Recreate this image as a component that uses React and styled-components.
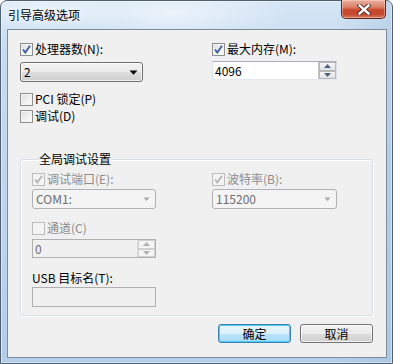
import React from 'react';
import styled, { createGlobalStyle } from 'styled-components';

const GlobalStyle = createGlobalStyle`
  html, body {
    margin: 0;
    padding: 0;
    background: #ffffff;
  }
  body {
    font-family: "Noto Sans CJK SC", "DejaVu Sans", sans-serif;
    font-size: 12px;
    color: #000;
  }
`;

const Window = styled.div`
  width: 393px;
  height: 364px;
  box-sizing: border-box;
  border: 1px solid #4f6072;
  border-radius: 7px 7px 0 0;
  padding: 0 5px 5px 6px;
  display: flex;
  flex-direction: column;
  background:
    radial-gradient(ellipse 120px 30px at 170px 12px, rgba(255, 255, 255, 0.55), rgba(255, 255, 255, 0)),
    radial-gradient(ellipse 90px 24px at 40px 10px, rgba(255, 255, 255, 0.5), rgba(255, 255, 255, 0)),
    linear-gradient(to right, rgba(255, 255, 255, 0) 85%, rgba(160, 190, 220, 0.4)),
    linear-gradient(to bottom, #d6e6f6 0%, #c7dbef 15%, #bdd4ec 60%, #b4cde8 100%);
  box-shadow: inset 0 0 0 1px rgba(255, 255, 255, 0.45);
`;

const TitleBar = styled.div`
  height: 28px;
  display: flex;
  justify-content: space-between;
  align-items: flex-start;
`;

const Title = styled.div`
  padding: 6px 0 0 1px;
  line-height: 16px;
  font-size: 12px;
  text-shadow: 0 0 6px rgba(255, 255, 255, 0.9);
`;

const CloseButton = styled.div`
  width: 45px;
  height: 19px;
  margin: -1px 1px 0 0;
  box-sizing: border-box;
  border: 1px solid #5e2519;
  border-top: none;
  border-radius: 0 0 5px 5px;
  display: flex;
  align-items: center;
  justify-content: center;
  background: linear-gradient(to bottom, #eab0a2 0%, #db8068 40%, #c8462c 55%, #c64a31 80%, #d97a5f 100%);
  box-shadow: inset 0 0 0 1px rgba(255, 220, 210, 0.45);
`;

const Client = styled.div`
  flex: 1;
  box-sizing: border-box;
  border: 1px solid #7d8c9c;
  background: #f0f0f0;
  padding: 11px 13px 0 12px;
  display: flex;
  flex-direction: column;
`;

const Columns = styled.div`
  display: grid;
  grid-template-columns: ${(p) => p.$left}px 1fr;
`;

const Column = styled.div`
  display: flex;
  flex-direction: column;
`;

const Row = styled.div`
  height: 16px;
  display: flex;
  align-items: center;
  gap: 2px;
  margin-top: ${(p) => p.$mt || 0}px;
  color: ${(p) => (p.$disabled ? '#8d8d8d' : '#000')};
  white-space: nowrap;
  line-height: 16px;
`;

const Box = styled.span`
  width: 13px;
  height: 13px;
  box-sizing: border-box;
  border: 1px solid ${(p) => (p.$disabled ? '#bcbcbc' : '#8e8f8f')};
  background: ${(p) =>
    p.$disabled
      ? '#f4f4f4'
      : 'linear-gradient(135deg, #dcdcdc 0%, #f2f2f2 60%, #ffffff 100%)'};
  box-shadow: inset 0 0 0 1px #f4f4f4;
  display: flex;
  align-items: center;
  justify-content: center;
  flex: none;
`;

const Check = ({ checked, disabled, children, mt }) => (
  <Row $mt={mt} $disabled={disabled}>
    <Box $disabled={disabled}>
      {checked && (
        <svg width="9" height="9" viewBox="0 0 9 9">
          <path
            d="M1 4.5 L3.3 7.5 L8 0.8"
            fill="none"
            stroke={disabled ? '#b5b5b5' : '#3d58a4'}
            strokeWidth="1.8"
          />
        </svg>
      )}
    </Box>
    <span>{children}</span>
  </Row>
);

const SelectBox = styled.div`
  width: ${(p) => p.$w}px;
  height: 20px;
  margin-top: ${(p) => p.$mt || 0}px;
  box-sizing: border-box;
  border: 1px solid ${(p) => (p.$disabled ? '#aeb2b5' : '#707070')};
  border-radius: 3px;
  display: flex;
  align-items: center;
  justify-content: space-between;
  padding: 0 4px 0 3px;
  color: ${(p) => (p.$disabled ? '#6d6d6d' : '#000')};
  background: ${(p) =>
    p.$disabled
      ? '#f4f4f4'
      : 'linear-gradient(to bottom, #f2f2f2 0%, #ebebeb 50%, #dddddd 51%, #cfcfcf 100%)'};
  box-shadow: inset 0 0 0 1px ${(p) => (p.$disabled ? '#f4f4f4' : 'rgba(255,255,255,0.7)')};
  line-height: 18px;
`;

const Select = ({ value, w, disabled, mt }) => (
  <SelectBox $w={w} $disabled={disabled} $mt={mt}>
    <span>{value}</span>
    <svg width="9" height="5" viewBox="0 0 9 5">
      {disabled ? (
        <path d="M1.5 0.5 H7.5 L4.5 4 Z" fill="#a8a8a8" />
      ) : (
        <path d="M0.5 0.5 H8.5 L4.5 4.8 Z" fill="#000" />
      )}
    </svg>
  </SelectBox>
);

const Field = styled.div`
  width: ${(p) => p.$w}px;
  height: ${(p) => p.$h || 19}px;
  margin-top: ${(p) => p.$mt || 0}px;
  box-sizing: border-box;
  border: 1px solid;
  border-color: ${(p) =>
    p.$disabled ? '#afafaf' : '#abadb3 #dbdfe6 #e3e9ef #e2e3ea'};
  background: ${(p) => (p.$disabled ? '#f0f0f0' : '#ffffff')};
  display: flex;
  align-items: stretch;
  color: ${(p) => (p.$disabled ? '#6d6d6d' : '#000')};
`;

const FieldText = styled.span`
  flex: 1;
  padding-left: 2px;
  line-height: 17px;
`;

const Spinner = styled.div`
  width: 17px;
  display: flex;
  flex-direction: column;
  border-left: 1px solid ${(p) => (p.$disabled ? '#d8d8d8' : '#c4c4c4')};
`;

const SpinButton = styled.div`
  flex: 1;
  display: flex;
  align-items: center;
  justify-content: center;
  box-sizing: border-box;
  border: 1px solid ${(p) => (p.$disabled ? '#d0d0d0' : '#b8b8b8')};
  background: ${(p) =>
    p.$disabled ? '#f4f4f4' : 'linear-gradient(to bottom, #f6f6f6, #e2e2e2)'};
`;

const Spin = ({ value, w, disabled, mt }) => {
  const color = disabled ? '#b0b0b0' : '#4d6185';
  return (
    <Field $w={w} $disabled={disabled} $mt={mt}>
      <FieldText>{value}</FieldText>
      <Spinner $disabled={disabled}>
        <SpinButton $disabled={disabled}>
          <svg width="7" height="4" viewBox="0 0 7 4">
            <path d="M0 4 H7 L3.5 0 Z" fill={color} />
          </svg>
        </SpinButton>
        <SpinButton $disabled={disabled}>
          <svg width="7" height="4" viewBox="0 0 7 4">
            <path d="M0 0 H7 L3.5 4 Z" fill={color} />
          </svg>
        </SpinButton>
      </Spinner>
    </Field>
  );
};

const Group = styled.fieldset`
  margin: 28px 0 0 0;
  padding: 0 0 8px 11px;
  border: 1px solid #d5dfe5;
  border-radius: 3px;
  box-shadow: inset 1px 1px 0 #ffffff, 1px 1px 0 #ffffff;
  min-inline-size: 0;
`;

const Legend = styled.legend`
  margin-left: 6px;
  padding: 0 1px;
  line-height: 14px;
  font-size: 12px;
  color: #000;
`;

const Label = styled.div`
  height: 16px;
  line-height: 16px;
  margin-top: ${(p) => p.$mt || 0}px;
  color: #000;
`;

const Footer = styled.div`
  display: flex;
  justify-content: flex-end;
  gap: 9px;
  margin-top: 8px;
`;

const Button = styled.div`
  width: 73px;
  height: 19px;
  box-sizing: border-box;
  border: 1px solid ${(p) => (p.$default ? '#3c7fb1' : '#707070')};
  border-radius: 3px;
  display: flex;
  align-items: center;
  justify-content: center;
  line-height: 16px;
  background: ${(p) =>
    p.$default
      ? 'linear-gradient(to bottom, #eaf6fd 0%, #d9f0fc 50%, #bee6fd 51%, #a7d9f5 100%)'
      : 'linear-gradient(to bottom, #f2f2f2 0%, #ebebeb 50%, #dddddd 51%, #cfcfcf 100%)'};
  box-shadow: inset 0 0 0 1px ${(p) => (p.$default ? '#48d0f8' : 'rgba(255,255,255,0.75)')};
`;

export default function App() {
  return (
    <>
      <GlobalStyle />
      <Window>
        <TitleBar>
          <Title>引导高级选项</Title>
          <CloseButton>
            <svg width="14" height="11" viewBox="0 0 14 11">
              <path d="M2.5 1.5 L11.5 9.5 M11.5 1.5 L2.5 9.5" stroke="#4a2a24" strokeWidth="4.2" strokeLinecap="square" />
              <path d="M2.5 1.5 L11.5 9.5 M11.5 1.5 L2.5 9.5" stroke="#ffffff" strokeWidth="2.4" strokeLinecap="square" />
            </svg>
          </CloseButton>
        </TitleBar>
        <Client>
          <Columns $left={192}>
            <Column>
              <Check checked>处理器数(N):</Check>
              <Select value="2" w={123} mt={5} />
              <Check mt={9}>PCI 锁定(P)</Check>
              <Check mt={1}>调试(D)</Check>
            </Column>
            <Column>
              <Check checked>最大内存(M):</Check>
              <Spin value="4096" w={125} mt={4} />
            </Column>
          </Columns>
          <Group>
            <Legend>全局调试设置</Legend>
            <Columns $left={180}>
              <Column>
                <Check checked disabled mt={5}>调试端口(E):</Check>
                <Select value="COM1:" w={124} mt={2} disabled />
                <Check disabled mt={11}>通道(C)</Check>
                <Spin value="0" w={124} mt={3} disabled />
                <Label $mt={12}>USB 目标名(T):</Label>
                <Field $w={124} $h={20} $mt={1} $disabled />
              </Column>
              <Column>
                <Check checked disabled mt={5}>波特率(B):</Check>
                <Select value="115200" w={125} mt={2} disabled />
              </Column>
            </Columns>
          </Group>
          <Footer>
            <Button $default>确定</Button>
            <Button>取消</Button>
          </Footer>
        </Client>
      </Window>
    </>
  );
}
